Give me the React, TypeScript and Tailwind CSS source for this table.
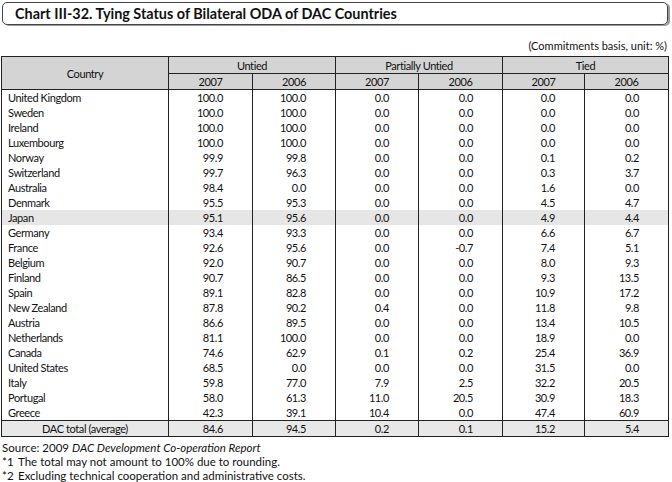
import React from "react"

type Row = [string, string, string, string, string, string, string]

const rows: Row[] = [
  ["United Kingdom", "100.0", "100.0", "0.0", "0.0", "0.0", "0.0"],
  ["Sweden", "100.0", "100.0", "0.0", "0.0", "0.0", "0.0"],
  ["Ireland", "100.0", "100.0", "0.0", "0.0", "0.0", "0.0"],
  ["Luxembourg", "100.0", "100.0", "0.0", "0.0", "0.0", "0.0"],
  ["Norway", "99.9", "99.8", "0.0", "0.0", "0.1", "0.2"],
  ["Switzerland", "99.7", "96.3", "0.0", "0.0", "0.3", "3.7"],
  ["Australia", "98.4", "0.0", "0.0", "0.0", "1.6", "0.0"],
  ["Denmark", "95.5", "95.3", "0.0", "0.0", "4.5", "4.7"],
  ["Japan", "95.1", "95.6", "0.0", "0.0", "4.9", "4.4"],
  ["Germany", "93.4", "93.3", "0.0", "0.0", "6.6", "6.7"],
  ["France", "92.6", "95.6", "0.0", "-0.7", "7.4", "5.1"],
  ["Belgium", "92.0", "90.7", "0.0", "0.0", "8.0", "9.3"],
  ["Finland", "90.7", "86.5", "0.0", "0.0", "9.3", "13.5"],
  ["Spain", "89.1", "82.8", "0.0", "0.0", "10.9", "17.2"],
  ["New Zealand", "87.8", "90.2", "0.4", "0.0", "11.8", "9.8"],
  ["Austria", "86.6", "89.5", "0.0", "0.0", "13.4", "10.5"],
  ["Netherlands", "81.1", "100.0", "0.0", "0.0", "18.9", "0.0"],
  ["Canada", "74.6", "62.9", "0.1", "0.2", "25.4", "36.9"],
  ["United States", "68.5", "0.0", "0.0", "0.0", "31.5", "0.0"],
  ["Italy", "59.8", "77.0", "7.9", "2.5", "32.2", "20.5"],
  ["Portugal", "58.0", "61.3", "11.0", "20.5", "30.9", "18.3"],
  ["Greece", "42.3", "39.1", "10.4", "0.0", "47.4", "60.9"],
]

const total: Row = ["DAC total (average)", "84.6", "94.5", "0.2", "0.1", "15.2", "5.4"]

const num = "text-right pr-[29px] border-l border-[#222]"

export default function App() {
  return (
    <div className="w-[672px] h-[482px] bg-white text-[#111] font-['Lato',sans-serif] relative overflow-hidden">
      <div className="pt-[2px] pl-[2px] pr-[4px]">
        <div className="h-[23px] border border-[#444] rounded-[5px] shadow-[2px_1px_0_#9a9a9a] flex items-center pl-[12px]">
          <span className="text-[14.4px] font-bold text-[#111]">
            Chart III-32. Tying Status of Bilateral ODA of DAC Countries
          </span>
        </div>
      </div>
      <div className="mt-[14px] pr-[5px] text-right text-[11px] leading-[14px]">
        (Commitments basis, unit: %)
      </div>
      <table className="ml-[1px] mt-[3px] w-[667px] table-fixed border-collapse border border-[#222] text-[11px] leading-[15px] tracking-[-0.4px]">
        <colgroup>
          <col className="w-[167px]" />
          <col className="w-[84px]" />
          <col className="w-[83px]" />
          <col className="w-[83px]" />
          <col className="w-[84px]" />
          <col className="w-[82px]" />
          <col className="w-[84px]" />
        </colgroup>
        <thead className="bg-[#d4d4d4]">
          <tr className="h-[17px]">
            <th rowSpan={2} className="font-normal text-center border border-[#222]">Country</th>
            <th colSpan={2} className="font-normal text-center border border-[#222]">Untied</th>
            <th colSpan={2} className="font-normal text-center border border-[#222]">Partially Untied</th>
            <th colSpan={2} className="font-normal text-center border border-[#222]">Tied</th>
          </tr>
          <tr className="h-[16px]">
            {["2007", "2006", "2007", "2006", "2007", "2006"].map((y, i) => (
              <th key={i} className="font-normal text-center border border-[#222]">{y}</th>
            ))}
          </tr>
        </thead>
        <tbody>
          {rows.map((r) => (
            <tr key={r[0]} className={r[0] === "Japan" ? "h-[15px] bg-[#e6e6e6]" : "h-[15px]"}>
              <td className="pl-[6px]">{r[0]}</td>
              {r.slice(1).map((v, i) => (
                <td key={i} className={num}>{v}</td>
              ))}
            </tr>
          ))}
          <tr className="h-[15px] bg-[#e8e8e8] border-t border-[#222]">
            <td className="text-center">{total[0]}</td>
            {total.slice(1).map((v, i) => (
              <td key={i} className={num}>{v}</td>
            ))}
          </tr>
        </tbody>
      </table>
      <div className="mt-[4px] pl-[2px] text-[11.5px] leading-[14px]">
        <div>
          Source: 2009 <i>DAC Development Co-operation Report</i>
        </div>
        <div className="flex">
          <span className="w-[16px]">*1</span>
          <span>The total may not amount to 100% due to rounding.</span>
        </div>
        <div className="flex">
          <span className="w-[16px]">*2</span>
          <span>Excluding technical cooperation and administrative costs.</span>
        </div>
      </div>
    </div>
  )
}
